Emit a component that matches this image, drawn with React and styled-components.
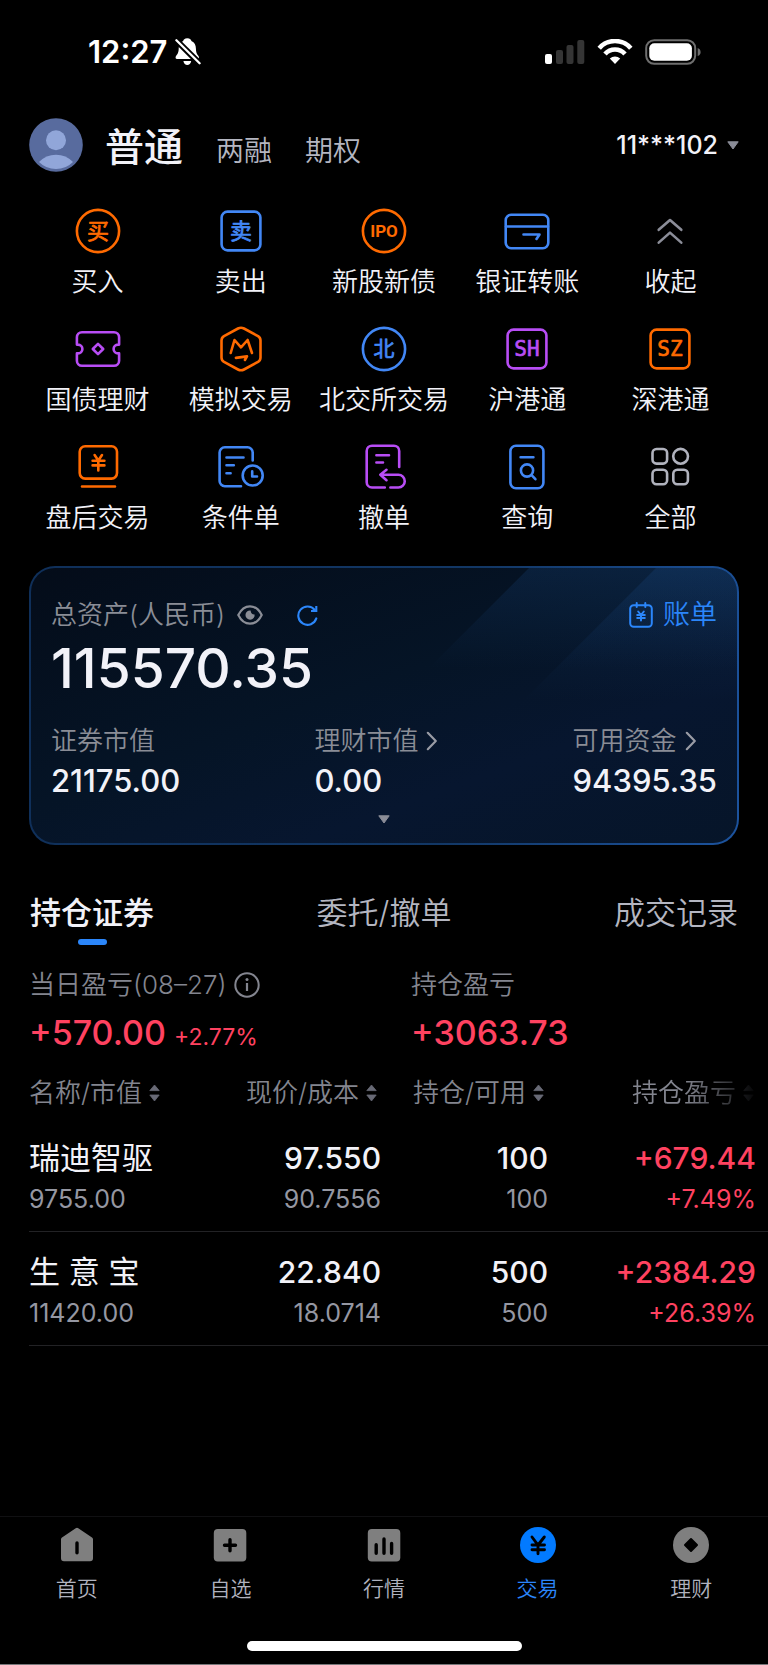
import React from "react";
import styled, { createGlobalStyle } from "styled-components";

const c = {
  text: "#f2f2f8",
  soft: "#b4b6c1",
  muted: "#83858f",
  cardMuted: "#8a8d96",
  orange: "#ff6a00",
  blue: "#4287f5",
  link: "#2b86fa",
  purple: "#b84df5",
  red: "#ff4260",
  grey: "#7f7f7f",
};

const GlobalStyle = createGlobalStyle`
  * { box-sizing: border-box; }
  body {
    margin: 0;
    background: #000;
    color: ${c.text};
    font-family: Inter, "Noto Sans CJK SC", sans-serif;
  }
  button, a {
    font: inherit;
    color: inherit;
    background: none;
    border: 0;
    padding: 0;
    text-decoration: none;
    cursor: pointer;
  }
  svg { display: block; flex: none; }
`;

const Page = styled.div`
  min-height: 100vh;
  display: flex;
  flex-direction: column;
  overflow-x: hidden;
`;

const StatusBar = styled.div`
  height: 104px;
  padding: 0 67px 0 88px;
  display: flex;
  align-items: center;
  justify-content: space-between;
`;

const Clock = styled.div`
  display: flex;
  align-items: center;
  gap: 8px;
  font-size: 31px;
  line-height: 38px;
  font-weight: 600;
  color: #fff;
`;

const Header = styled.header`
  height: 82px;
  padding: 0 29px;
  display: flex;
  align-items: center;
  justify-content: space-between;
`;

const AccountTabs = styled.div`
  display: flex;
  align-items: center;
  gap: 22px;
`;

const TabGroup = styled.div`
  display: flex;
  align-items: baseline;
  gap: 33px;
  padding-top: 8px;
`;

const AccountTab = styled.button`
  font-size: ${(p) => (p.$active ? 39 : 28)}px;
  line-height: 48px;
  font-weight: ${(p) => (p.$active ? 500 : 350)};
  color: ${(p) => (p.$active ? c.text : c.soft)};
`;

const AccountPicker = styled.button`
  display: flex;
  align-items: center;
  gap: 9px;
  font-size: 25px;
  line-height: 30px;
  font-weight: 500;
`;

const Shortcuts = styled.nav`
  padding: 21px 26px 0;
  display: grid;
  grid-template-columns: repeat(5, minmax(0, 1fr));
  row-gap: 28px;
`;

const Shortcut = styled.button`
  display: flex;
  flex-direction: column;
  align-items: center;
  gap: 12px;
  font-size: 26px;
  line-height: 30px;
  font-weight: 350;
  white-space: nowrap;
`;

const Card = styled.section`
  position: relative;
  margin: 33px 29px 0;
  padding: 32px 20px 19px;
  border: 2px solid transparent;
  border-radius: 26px;
  overflow: hidden;
  background:
    linear-gradient(160deg, #040c19, #051426 45%, #07162f 70%, #061529) padding-box,
    linear-gradient(100deg, #0f2f59, #123765 60%, #1c539e) border-box;

  &::before,
  &::after {
    content: "";
    position: absolute;
    top: 0;
    right: 0;
    background: linear-gradient(rgba(36, 100, 180, 0.17), transparent);
  }
  &::before {
    width: 308px;
    height: 100px;
    clip-path: polygon(100px 0, 100% 0, 100% 100%, 0 100%);
  }
  &::after {
    width: 215px;
    height: 134px;
    clip-path: polygon(134px 0, 100% 0, 100% 100%, 0 100%);
  }
`;

const CardBody = styled.div`
  position: relative;
  z-index: 1;
  display: flex;
  flex-direction: column;
`;

const CardTop = styled.div`
  display: flex;
  justify-content: space-between;
  align-items: center;
  height: 30px;
`;

const CardTitle = styled.div`
  display: flex;
  align-items: center;
  font-size: 26px;
  line-height: 30px;
  font-weight: 350;
  color: ${c.cardMuted};
`;

const IconButton = styled.button`
  margin-left: ${(p) => p.$gap}px;
`;

const BillLink = styled.a`
  display: flex;
  align-items: center;
  gap: 10px;
  font-size: 27px;
  line-height: 30px;
  font-weight: 350;
  color: ${c.link};
`;

const Total = styled.div`
  margin-top: 10px;
  font-size: 55px;
  line-height: 56px;
  font-weight: 500;
`;

const Assets = styled.div`
  margin-top: 30px;
  display: flex;
  justify-content: space-between;
`;

const AssetLabel = styled.div`
  display: flex;
  align-items: center;
  gap: 8px;
  margin-bottom: 5px;
  font-size: 26px;
  line-height: 30px;
  font-weight: 350;
  color: ${c.cardMuted};
`;

const AssetValue = styled.div`
  font-size: 31px;
  line-height: 40px;
  font-weight: 500;
`;

const Expand = styled.button`
  margin-top: 14px;
  align-self: center;
`;

const Tabs = styled.div`
  margin-top: 44px;
  padding: 0 30px;
  display: flex;
  justify-content: space-between;
`;

const Tab = styled.button`
  display: flex;
  flex-direction: column;
  align-items: center;
  height: 56px;
  font-size: 31px;
  line-height: 48px;
  font-weight: ${(p) => (p.$active ? 500 : 350)};
  color: ${(p) => (p.$active ? c.text : c.soft)};

  &::after {
    content: "";
    width: 29px;
    height: 6px;
    margin-top: 2px;
    border-radius: 3px;
    background: ${(p) => (p.$active ? c.link : "transparent")};
  }
`;

const Profit = styled.section`
  padding: 25px 29px 0;
  display: grid;
  grid-template-columns: 382px 1fr;
`;

const ProfitLabel = styled.div`
  display: flex;
  align-items: center;
  gap: 7px;
  font-size: 26px;
  line-height: 30px;
  font-weight: 350;
  color: ${c.muted};
`;

const ProfitValue = styled.div`
  margin-top: 12px;
  display: flex;
  align-items: baseline;
  gap: 8px;
  font-size: 34px;
  line-height: 42px;
  font-weight: 500;
  color: ${c.red};
`;

const Percent = styled.span`
  font-size: 23px;
  line-height: 28px;
  font-weight: 400;
`;

const Holdings = styled.div`
  margin: 14px 0 0 29px;
`;

const Table = styled.table`
  width: 100%;
  table-layout: fixed;
  border-collapse: separate;
  border-spacing: 0;
`;

const Col = styled.col`
  width: ${(p) => (p.$width ? `${p.$width}px` : "auto")};
`;

const HeadCell = styled.th`
  height: 50px;
  padding: 0 ${(p) => p.$pad}px 0 0;
  mask-image: ${(p) => (p.$fade ? "linear-gradient(90deg, #000 62%, transparent 96%)" : "none")};
`;

const SortButton = styled.button`
  display: flex;
  align-items: center;
  justify-content: ${(p) => (p.$left ? "flex-start" : "flex-end")};
  gap: 7px;
  width: 100%;
  font-size: 26px;
  line-height: 30px;
  font-weight: 350;
  color: ${c.muted};
  white-space: nowrap;
`;

const Cell = styled.td`
  padding: 21px ${(p) => (p.$last ? 12 : 0)}px 17px 0;
  border-bottom: 1px solid #222225;
  text-align: ${(p) => (p.$left ? "left" : "right")};
  color: ${(p) => (p.$last ? c.red : "inherit")};
  white-space: nowrap;
`;

const Primary = styled.div`
  font-size: ${(p) => (p.$name ? 31 : 30)}px;
  line-height: 38px;
  font-weight: ${(p) => (p.$name ? 400 : 500)};
`;

const Secondary = styled.div`
  margin-top: 7px;
  font-size: 25px;
  line-height: 30px;
  color: ${(p) => (p.$red ? c.red : "#9597a2")};
`;

const BottomBar = styled.footer`
  margin-top: auto;
  border-top: 1px solid #101012;
  border-bottom: 1px solid #77777a;
  display: flex;
  flex-direction: column;
  align-items: center;
`;

const BottomNav = styled.nav`
  width: 100%;
  padding-top: 10px;
  display: grid;
  grid-template-columns: repeat(5, 1fr);
`;

const NavItem = styled.a`
  display: flex;
  flex-direction: column;
  align-items: center;
  gap: 12px;
  font-size: 21px;
  line-height: 28px;
  font-weight: 350;
  color: ${(p) => (p.$active ? c.link : "#b0b2be")};
`;

const HomeIndicator = styled.div`
  width: 275px;
  height: 10px;
  margin: 38px 0 13px;
  border-radius: 5px;
  background: #fff;
`;

const IconText = styled.text`
  font-family: ${(p) => p.$font || '"Noto Sans CJK SC"'}, sans-serif;
  font-size: ${(p) => p.$size}px;
  font-weight: ${(p) => p.$weight || 400};
  text-anchor: middle;
  fill: currentColor;
  stroke-width: ${(p) => (p.$weight ? 0 : 0.7)};
`;

const MONO = '"DejaVu Sans Mono"';

const Icon = ({ color, children }) => (
  <svg width="48" height="48" viewBox="0 0 48 48" fill="none" stroke="currentColor"
    strokeWidth="2.6" strokeLinecap="round" strokeLinejoin="round" style={{ color }} aria-hidden="true">
    {children}
  </svg>
);

const Ring = () => <circle cx="24" cy="24" r="21.1" />;
const Box = () => <rect x="4.6" y="4.6" width="38.8" height="38.8" rx="6" />;

const shortcuts = [
  ["买入", c.orange, <><Ring /><IconText x="24" y="32" $size={22}>买</IconText></>],
  ["卖出", c.blue, <><Box /><IconText x="24" y="32" $size={22}>卖</IconText></>],
  ["新股新债", c.orange, <><Ring /><IconText x="24" y="30" $size={17} $font="Roboto" $weight={700}>IPO</IconText></>],
  ["银证转账", c.blue, <>
    <rect x="2.7" y="7.7" width="42.6" height="33.6" rx="5.5" />
    <path d="M3 19.5H45M20.5 27.5H36.5L33.5 32" />
  </>],
  ["收起", "#8b8d98", <path d="M12.7 22.8 24 13 35.3 22.8M12.7 35.6 24 25.6 35.3 35.6" />],
  ["国债理财", c.purple, <>
    <path d="M8 7.2H40A5.1 5.1 0 0 1 45.1 12.3V19.6H44A4.4 4.4 0 0 0 44 28.4H45.1V35.7A5.1 5.1 0 0 1 40 40.8H8A5.1 5.1 0 0 1 2.9 35.7V28.4H4A4.4 4.4 0 0 0 4 19.6H2.9V12.3A5.1 5.1 0 0 1 8 7.2Z" />
    <path d="M24 18.8 29.2 24 24 29.2 18.8 24Z" />
  </>],
  ["模拟交易", c.orange, <>
    <path d="M21 3.5Q24 1.9 27 3.5L41 11.2Q43.5 12.7 43.5 15.6V32.4Q43.5 35.3 41 36.8L27 44.5Q24 46.1 21 44.5L7 36.8Q4.5 35.3 4.5 32.4V15.6Q4.5 12.7 7 11.2Z" />
    <path d="M13.7 28 17.5 15 24 22.3 30.6 15 35 28M18.9 32.9 30 31.4 27.9 35" />
  </>],
  ["北交所交易", c.blue, <><Ring /><IconText x="24" y="31" $size={21}>北</IconText></>],
  ["沪港通", c.purple, <><Box /><IconText x="24" y="31" $size={21} $font={MONO}>SH</IconText></>],
  ["深港通", c.orange, <><Box /><IconText x="24" y="31" $size={21} $font={MONO}>SZ</IconText></>],
  ["盘后交易", c.orange, <>
    <rect x="5.7" y="3.3" width="37.3" height="32.3" rx="5.5" />
    <path d="M20.6 12 24.3 17.4 28 12M24.3 17.4V27.4M18.6 17.8H30.4M18.6 22.4H30.4M8 43.5H41" />
  </>],
  ["条件单", c.blue, <>
    <path d="M35.7 17.5V9.5A5.2 5.2 0 0 0 30.5 4.3H7.8A5.2 5.2 0 0 0 2.6 9.5V38A5.2 5.2 0 0 0 7.8 43.2H24" />
    <path d="M9.5 14.5H26.5M9.5 22.2H16.8M9.5 30.2H13.6" />
    <circle cx="35.7" cy="32.5" r="10" />
    <path d="M35.2 28.4V33.5H40" />
  </>],
  ["撤单", c.purple, <>
    <path d="M39.2 24V8A5.3 5.3 0 0 0 33.9 2.7H12A5.3 5.3 0 0 0 6.7 8V39.2A5.3 5.3 0 0 0 12 44.5H24.8" />
    <path d="M16.4 12.2H29M16.4 19.5H23M26.5 26.8 20.3 31.8 26.5 37.2M20.5 31.8H38.4A6.3 6.3 0 0 1 38.4 44.5H30.4" />
  </>],
  ["查询", c.blue, <>
    <rect x="7.4" y="2.7" width="33" height="42.6" rx="5.5" />
    <path d="M17.6 14.2H30.4M28.6 32.2 32.4 36.2" />
    <circle cx="24" cy="27.5" r="6.1" />
  </>],
  ["全部", "#b0b2bd", <>
    <rect x="6.5" y="6" width="14.6" height="14.6" rx="4" />
    <circle cx="34.6" cy="13.3" r="7.4" />
    <rect x="6.5" y="26.7" width="14.6" height="14.6" rx="4" />
    <rect x="27.3" y="26.7" width="14.6" height="14.6" rx="4" />
  </>],
];

const BellOff = () => (
  <svg width="26" height="28" viewBox="0 0 26 28" aria-label="静音">
    <path fill="#fff" d="M12.3.3C9.6.3 8.4 2 8.2 2.9 5 4.3 3.7 7 3.7 10.5 3.7 14.5 2.6 15.8 1.2 17.8.2 19.2.2 21 2.2 21H22.3C24.3 21 24.3 19.2 23.3 17.8 21.9 15.8 20.9 14.5 20.9 10.5 20.9 7 19.6 4.3 16.4 2.9 16.2 2 15 .3 12.3.3ZM8.4 23H16.2C15.8 25.6 14.2 27 12.3 27S8.8 25.6 8.4 23Z" />
    <path d="M1 2 25 25.8" stroke="#000" strokeWidth="6" />
    <path d="M1.4 2.2 24.6 25.2" stroke="#fff" strokeWidth="2.3" strokeLinecap="round" />
  </svg>
);

const Signals = () => (
  <svg width="156" height="26" viewBox="0 0 156 26" aria-label="信号与电量">
    <rect x="0" y="15" width="7" height="10" rx="2" fill="#fff" />
    <rect x="11" y="11" width="7" height="14" rx="2" fill="#353535" />
    <rect x="21.5" y="6" width="7" height="19" rx="2" fill="#353535" />
    <rect x="32.3" y="1" width="7" height="24" rx="2" fill="#353535" />
    <g fill="none" stroke="#fff" strokeWidth="4.6">
      <path d="M54.2 9.2A21 21 0 0 1 85.8 9.2" />
      <path d="M60 15A13.5 13.5 0 0 1 80 15" />
    </g>
    <path fill="#fff" d="M64.8 19.4A8 8 0 0 1 75.2 19.4L70 25Z" />
    <rect x="101.2" y="1.2" width="49" height="23.6" rx="8" fill="none" stroke="#6e6e6e" strokeWidth="2" />
    <rect x="104.3" y="4.3" width="42.6" height="17.4" rx="5" fill="#fff" />
    <path d="M152.7 9Q155.6 10 155.6 13T152.7 17Z" fill="#6e6e6e" />
  </svg>
);

const Avatar = () => (
  <svg width="54" height="54" viewBox="0 0 54 54" aria-label="头像">
    <circle cx="27" cy="27" r="26.8" fill="#586b9e" />
    <circle cx="27" cy="22.3" r="10" fill="#91a6d9" />
    <path d="M10 44Q17 36.7 27 36.7T44 44Q37 51 27 51T10 44Z" fill="#91a6d9" />
  </svg>
);

const Caret = () => (
  <svg width="12" height="9" viewBox="0 0 12 9" aria-hidden="true">
    <path d="M.8 .8H11.2L6 8Z" fill="#8b8d98" stroke="#8b8d98" strokeLinejoin="round" />
  </svg>
);

const Sort = () => (
  <svg width="11" height="18" viewBox="0 0 11 18" aria-hidden="true">
    <path d="M5.5 1 10.2 6.6H.8ZM5.5 17 10.2 11H.8Z" fill="#686a76" stroke="#686a76" strokeWidth=".8" strokeLinejoin="round" />
  </svg>
);

const Arrow = () => (
  <svg width="12" height="20" viewBox="0 0 12 20" fill="none" aria-hidden="true">
    <path d="M1.8 1.8 9.8 10 1.8 18.2" stroke="#9a9ca5" strokeWidth="2.2" strokeLinecap="round" strokeLinejoin="round" />
  </svg>
);

const Eye = () => (
  <svg width="26" height="20" viewBox="0 0 26 20" aria-hidden="true">
    <path d="M1.3 10C4 4.5 8 1.3 13 1.3S22 4.5 24.7 10C22 15.5 18 18.7 13 18.7S4 15.5 1.3 10Z" fill="none" stroke="#8a8d96" strokeWidth="2.2" />
    <path d="M13.6 5.5A4.6 4.6 0 1 0 17.6 9.4Q14 9.6 13.6 5.5Z" fill="#8a8d96" />
  </svg>
);

const Refresh = () => (
  <svg width="21" height="21" viewBox="0 0 21 21" fill="none" stroke={c.link} strokeWidth="2.1" aria-hidden="true">
    <path d="M17.8 5A9.2 9.2 0 1 0 19.3 13.4" strokeLinecap="round" />
    <path d="M19.3 1V6H14" />
  </svg>
);

const Bill = () => (
  <svg width="24" height="26" viewBox="0 0 24 26" fill="none" stroke="currentColor" strokeWidth="2" strokeLinecap="round" aria-hidden="true">
    <rect x="1.2" y="3.2" width="21.6" height="21.6" rx="3.5" />
    <path d="M7.7 1V5M16.3 1V5M9.2 9.5 12 13 14.8 9.5M12 13V18.6M8.2 13H15.8M8.2 16.1H15.8" />
  </svg>
);

const Info = () => (
  <svg width="26" height="26" viewBox="0 0 26 26" fill="none" stroke={c.muted} aria-hidden="true">
    <circle cx="13" cy="13" r="11.7" strokeWidth="2" />
    <path d="M13 11V19" strokeWidth="2.2" />
    <circle cx="13" cy="7.4" r="1.5" fill={c.muted} stroke="none" />
  </svg>
);

const NavIcon = ({ children }) => (
  <svg width="36" height="36" viewBox="0 0 36 36" fill={c.grey} stroke="#000" strokeLinecap="round" aria-hidden="true">
    {children}
  </svg>
);

const navItems = [
  ["首页", <>
    <path stroke="none" d="M16.7 1.2Q18 .2 19.3 1.2L33 10.6Q34 11.3 34 12.5V31.3Q34 34.3 31 34.3H5Q2 34.3 2 31.3V12.5Q2 11.3 3 10.6Z" />
    <path strokeWidth="3.4" d="M18 16V25.7" />
  </>],
  ["自选", <>
    <rect stroke="none" x="1.8" y="2" width="32.5" height="32.5" rx="4" />
    <path strokeWidth="3.4" d="M12.5 18.2H23.5M18 12.7V23.7" />
  </>],
  ["行情", <>
    <rect stroke="none" x="1.8" y="2" width="32.5" height="32.5" rx="4" />
    <path strokeWidth="3.4" d="M10.2 17.7V26.3M18 12V26.3M25.6 16.4V26.3" />
  </>],
  ["交易", <>
    <circle stroke="none" fill="#027aff" cx="18" cy="18" r="18" />
    <path fill="none" strokeWidth="2.9" d="M12 10 18 18 24.3 10M18 18V26.7M12 18H24.5M12 22.7H24.5" />
  </>],
  ["理财", <>
    <circle stroke="none" cx="18" cy="18" r="18" />
    <path fill="#000" strokeWidth="2" strokeLinejoin="round" d="M18 12 24 18 18 24 12 18Z" />
  </>],
];

const holdings = [
  ["瑞迪智驱", "9755.00", "97.550", "90.7556", "100", "100", "+679.44", "+7.49%"],
  ["生 意 宝", "11420.00", "22.840", "18.0714", "500", "500", "+2384.29", "+26.39%"],
];

const columns = [
  { label: "名称/市值", left: true },
  { label: "现价/成本", width: 152, pad: 4 },
  { label: "持仓/可用", width: 167, pad: 4 },
  { label: "持仓盈亏", width: 220, pad: 14, fade: true },
];

export default function App() {
  return (
    <Page>
      <GlobalStyle />
      <StatusBar>
        <Clock>12:27<BellOff /></Clock>
        <Signals />
      </StatusBar>

      <Header>
        <AccountTabs>
          <Avatar />
          <TabGroup>
            <AccountTab $active>普通</AccountTab>
            <AccountTab>两融</AccountTab>
            <AccountTab>期权</AccountTab>
          </TabGroup>
        </AccountTabs>
        <AccountPicker>11***102<Caret /></AccountPicker>
      </Header>

      <main>
        <Shortcuts>
          {shortcuts.map(([label, color, drawing]) => (
            <Shortcut key={label}>
              <Icon color={color}>{drawing}</Icon>
              {label}
            </Shortcut>
          ))}
        </Shortcuts>

        <Card>
          <CardBody>
            <CardTop>
              <CardTitle>
                总资产(人民币)
                <IconButton $gap={12} aria-label="隐藏金额"><Eye /></IconButton>
                <IconButton $gap={34} aria-label="刷新"><Refresh /></IconButton>
              </CardTitle>
              <BillLink href="#bill"><Bill />账单</BillLink>
            </CardTop>
            <Total>115570.35</Total>
            <Assets>
              <div>
                <AssetLabel>证券市值</AssetLabel>
                <AssetValue>21175.00</AssetValue>
              </div>
              <div>
                <AssetLabel>理财市值<Arrow /></AssetLabel>
                <AssetValue>0.00</AssetValue>
              </div>
              <div>
                <AssetLabel>可用资金<Arrow /></AssetLabel>
                <AssetValue>94395.35</AssetValue>
              </div>
            </Assets>
            <Expand aria-label="展开"><Caret /></Expand>
          </CardBody>
        </Card>

        <Tabs>
          <Tab $active>持仓证券</Tab>
          <Tab>委托/撤单</Tab>
          <Tab>成交记录</Tab>
        </Tabs>

        <Profit>
          <div>
            <ProfitLabel>当日盈亏(08–27)<Info /></ProfitLabel>
            <ProfitValue>+570.00<Percent>+2.77%</Percent></ProfitValue>
          </div>
          <div>
            <ProfitLabel>持仓盈亏</ProfitLabel>
            <ProfitValue>+3063.73</ProfitValue>
          </div>
        </Profit>

        <Holdings>
          <Table>
            <colgroup>
              {columns.map((col) => <Col key={col.label} $width={col.width} />)}
            </colgroup>
            <thead>
              <tr>
                {columns.map((col) => (
                  <HeadCell key={col.label} $pad={col.pad || 0} $fade={col.fade}>
                    <SortButton $left={col.left}>{col.label}<Sort /></SortButton>
                  </HeadCell>
                ))}
              </tr>
            </thead>
            <tbody>
              {holdings.map(([name, value, price, cost, held, usable, profit, rate]) => (
                <tr key={name}>
                  <Cell $left><Primary $name>{name}</Primary><Secondary>{value}</Secondary></Cell>
                  <Cell><Primary>{price}</Primary><Secondary>{cost}</Secondary></Cell>
                  <Cell><Primary>{held}</Primary><Secondary>{usable}</Secondary></Cell>
                  <Cell $last><Primary>{profit}</Primary><Secondary $red>{rate}</Secondary></Cell>
                </tr>
              ))}
            </tbody>
          </Table>
        </Holdings>
      </main>

      <BottomBar>
        <BottomNav>
          {navItems.map(([label, drawing]) => (
            <NavItem key={label} href={`#${label}`} $active={label === "交易"}>
              <NavIcon>{drawing}</NavIcon>
              {label}
            </NavItem>
          ))}
        </BottomNav>
        <HomeIndicator />
      </BottomBar>
    </Page>
  );
}
